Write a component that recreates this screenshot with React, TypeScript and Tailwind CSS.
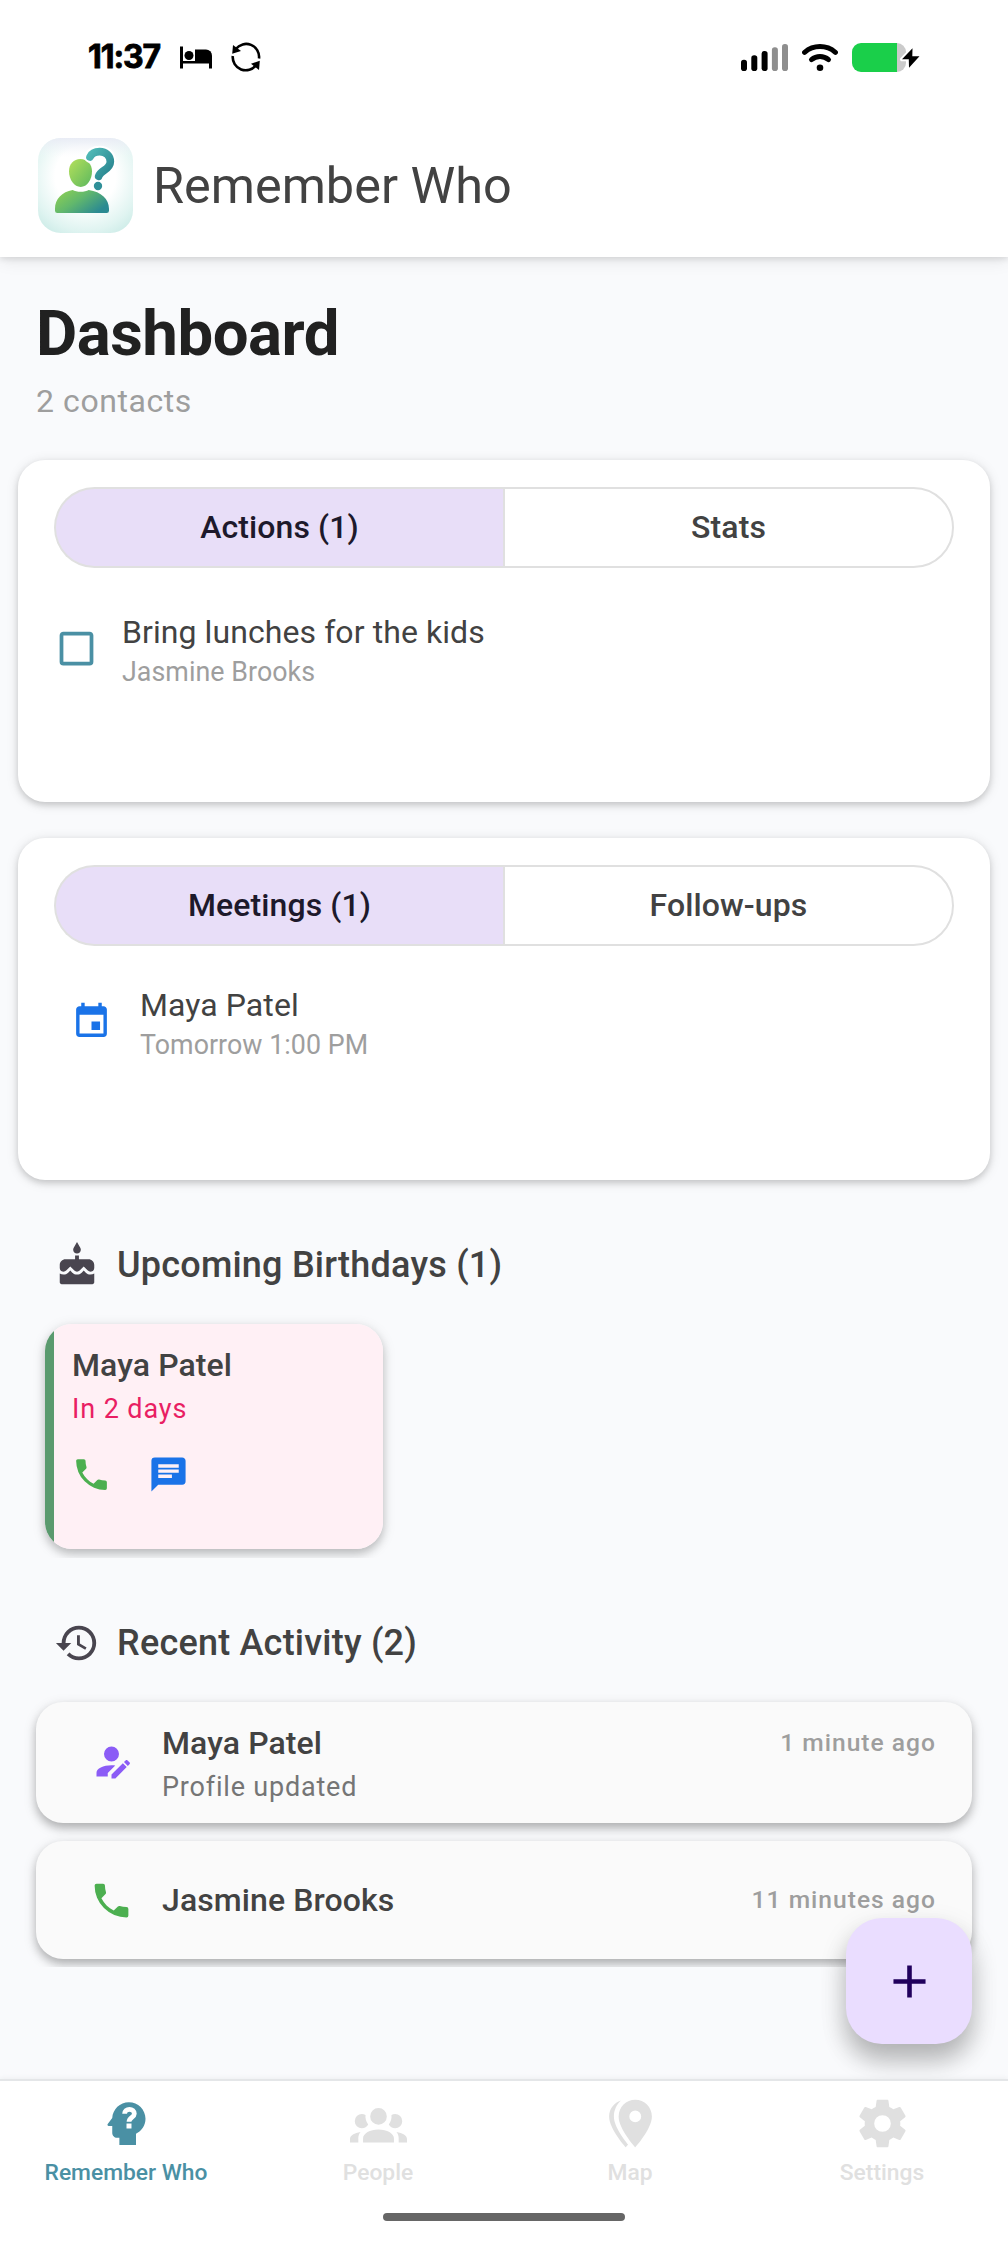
import type { ReactNode } from 'react'

// 24x24 icon paths
const icons = {
  checkbox: 'M19,3H5C3.89,3 3,3.89 3,5V19A2,2 0 0,0 5,21H19A2,2 0 0,0 21,19V5C21,3.89 20.1,3 19,3M19,5V19H5V5H19Z',
  calendar: 'M19,19H5V8H19M16,1V3H8V1H6V3H5C3.89,3 3,3.89 3,5V19A2,2 0 0,0 5,21H19A2,2 0 0,0 21,19V5C21,3.89 20.1,3 19,3H18V1M17,12H12V17H17V12Z',
  cake: 'M12 6C13.11 6 14 5.1 14 4C14 3.62 13.9 3.27 13.71 2.97L12 0L10.29 2.97C10.1 3.27 10 3.62 10 4C10 5.1 10.9 6 12 6M16.6 16L15.53 14.92L14.45 16C13.15 17.29 10.87 17.3 9.56 16L8.49 14.92L7.4 16C6.75 16.64 5.88 17 4.96 17C4.23 17 3.56 16.77 3 16.39V21C3 21.55 3.45 22 4 22H20C20.55 22 21 21.55 21 21V16.39C20.44 16.77 19.77 17 19.04 17C18.12 17 17.25 16.64 16.6 16M18 9H13V7H11V9H6C4.34 9 3 10.34 3 12V13.54C3 14.62 3.88 15.5 4.96 15.5C5.5 15.5 6 15.3 6.34 14.93L8.5 12.8L10.61 14.93C11.35 15.67 12.64 15.67 13.38 14.93L15.5 12.8L17.65 14.93C18 15.3 18.5 15.5 19.03 15.5C20.11 15.5 21 14.62 21 13.54V12C21 10.34 19.66 9 18 9Z',
  history: 'M13.5,8H12V13L16.28,15.54L17,14.33L13.5,12.25V8M13,3A9,9 0 0,0 4,12H1L4.96,16.03L9,12H6A7,7 0 0,1 13,5A7,7 0 0,1 20,12A7,7 0 0,1 13,19C11.07,19 9.32,18.21 8.06,16.94L6.64,18.36C8.27,20 10.5,21 13,21A9,9 0 0,0 22,12A9,9 0 0,0 13,3',
  phone: 'M6.62,10.79C8.06,13.62 10.38,15.94 13.21,17.38L15.41,15.18C15.69,14.9 16.08,14.82 16.43,14.93C17.55,15.3 18.75,15.5 20,15.5A1,1 0 0,1 21,16.5V20A1,1 0 0,1 20,21A17,17 0 0,1 3,4A1,1 0 0,1 4,3H7.5A1,1 0 0,1 8.5,4C8.5,5.25 8.7,6.45 9.07,7.57C9.18,7.92 9.1,8.31 8.82,8.59L6.62,10.79Z',
  message: 'M20,2H4A2,2 0 0,0 2,4V22L6,18H20A2,2 0 0,0 22,16V4C22,2.89 21.1,2 20,2M6,9H18V11H6M14,14H6V12H14M18,8H6V6H18',
  accountEdit: 'M21.7,13.35L20.7,14.35L18.65,12.3L19.65,11.3C19.86,11.09 20.21,11.09 20.42,11.3L21.7,12.58C21.91,12.79 21.91,13.14 21.7,13.35M12,18.94L18.06,12.88L20.11,14.93L14.06,21H12V18.94M12,14C7.58,14 4,15.79 4,18V20H10V18.11L14,14.11C13.34,14.03 12.67,14 12,14M12,4A4,4 0 0,0 8,8A4,4 0 0,0 12,12A4,4 0 0,0 16,8A4,4 0 0,0 12,4Z',
  plus: 'M19,13H13V19H11V13H5V11H11V5H13V11H19V13Z',
  group: 'M12,5.5A3.5,3.5 0 0,1 15.5,9A3.5,3.5 0 0,1 12,12.5A3.5,3.5 0 0,1 8.5,9A3.5,3.5 0 0,1 12,5.5M5,8C5.56,8 6.08,8.15 6.53,8.42C6.38,9.85 6.8,11.27 7.66,12.38C7.16,13.34 6.16,14 5,14A3,3 0 0,1 2,11A3,3 0 0,1 5,8M19,8A3,3 0 0,1 22,11A3,3 0 0,1 19,14C17.84,14 16.84,13.34 16.34,12.38C17.2,11.27 17.62,9.85 17.47,8.42C17.92,8.15 18.44,8 19,8M5.5,18.25C5.5,16.18 8.41,14.5 12,14.5C15.59,14.5 18.5,16.18 18.5,18.25V20H5.5V18.25M0,20V18.5C0,17.11 1.89,15.94 4.45,15.6C3.86,16.28 3.5,17.22 3.5,18.25V20H0M24,20H20.5V18.25C20.5,17.22 20.14,16.28 19.55,15.6C22.11,15.94 24,17.11 24,18.5V20Z',
  markers: 'M14,11.5A2.5,2.5 0 0,0 16.5,9A2.5,2.5 0 0,0 14,6.5A2.5,2.5 0 0,0 11.5,9A2.5,2.5 0 0,0 14,11.5M14,2C17.86,2 21,5.13 21,9C21,14.25 14,22 14,22C14,22 7,14.25 7,9A7,7 0 0,1 14,2M5,9C5,13.5 10.08,19.66 11,20.81L10,22C10,22 3,14.25 3,9C3,5.83 5.11,3.15 8,2.29C6.16,3.94 5,6.33 5,9Z',
  cog: 'M12,15.5A3.5,3.5 0 0,1 8.5,12A3.5,3.5 0 0,1 12,8.5A3.5,3.5 0 0,1 15.5,12A3.5,3.5 0 0,1 12,15.5M19.43,12.97C19.47,12.65 19.5,12.33 19.5,12C19.5,11.67 19.47,11.34 19.43,11L21.54,9.37C21.73,9.22 21.78,8.95 21.66,8.73L19.66,5.27C19.54,5.05 19.27,4.96 19.05,5.05L16.56,6.05C16.04,5.66 15.5,5.32 14.87,5.07L14.5,2.42C14.46,2.18 14.25,2 14,2H10C9.75,2 9.54,2.18 9.5,2.42L9.13,5.07C8.5,5.32 7.96,5.66 7.44,6.05L4.95,5.05C4.73,4.96 4.46,5.05 4.34,5.27L2.34,8.73C2.21,8.95 2.27,9.22 2.46,9.37L4.57,11C4.53,11.34 4.5,11.67 4.5,12C4.5,12.33 4.53,12.65 4.57,12.97L2.46,14.63C2.27,14.78 2.21,15.05 2.34,15.27L4.34,18.73C4.46,18.95 4.73,19.03 4.95,18.95L7.44,17.94C7.96,18.34 8.5,18.68 9.13,18.93L9.5,21.58C9.54,21.82 9.75,22 10,22H14C14.25,22 14.46,21.82 14.5,21.58L14.87,18.93C15.5,18.67 16.04,18.34 16.56,17.94L19.05,18.95C19.27,19.03 19.54,18.95 19.66,18.73L21.66,15.27C21.78,15.05 21.73,14.78 21.54,14.63L19.43,12.97Z',
}

function Icon({ name, className }: { name: keyof typeof icons; className: string }) {
  return (
    <svg viewBox="0 0 24 24" fill="currentColor" className={`shrink-0 ${className}`}>
      <path d={icons[name]} />
    </svg>
  )
}

function HeadQuestion({ className }: { className: string }) {
  return (
    <svg viewBox="0 0 24 24" fill="currentColor" className={className}>
      <path d="M13 3C9.23 3 6.19 5.95 6 9.66L4.08 12.19C3.84 12.5 4.08 13 4.5 13H6V16C6 17.11 6.89 18 8 18H9V21H16V16.31C18.37 15.19 20 12.8 20 10C20 6.14 16.88 3 13 3Z" />
      <path d="M11.2 7.9C11.2 6.8 12.1 6 13.25 6S15.3 6.8 15.3 7.9C15.3 9.4 13.05 9.5 13.05 11.3" fill="none" stroke="#fff" strokeWidth="2" />
      <path d="M12 12h2.1v2.1H12z" fill="#fff" />
    </svg>
  )
}

function AppLogo() {
  return (
    <svg viewBox="0 0 285 285" className="size-[95px] shrink-0">
      <defs>
        <radialGradient id="logoBg" cx="0.5" cy="0.4" r="0.8">
          <stop offset="0.4" stopColor="#fff" />
          <stop offset="0.72" stopColor="#e0f4f1" />
          <stop offset="1" stopColor="#bfe6e1" />
        </radialGradient>
        <linearGradient id="logoTop" x1="0" y1="0" x2="0" y2="1">
          <stop offset="0" stopColor="#e9ecf5" />
          <stop offset="0.2" stopColor="#f3f6fa" stopOpacity="0" />
        </linearGradient>
        <linearGradient id="logoHead" x1="0" y1="0" x2="1" y2="1">
          <stop offset="0" stopColor="#b5e05a" />
          <stop offset="1" stopColor="#5cb85f" />
        </linearGradient>
        <linearGradient id="logoBody" x1="0" y1="0" x2="1" y2="0.6">
          <stop offset="0" stopColor="#93d350" />
          <stop offset="0.5" stopColor="#62b86c" />
          <stop offset="1" stopColor="#2b8a92" />
        </linearGradient>
        <linearGradient id="logoMark" gradientUnits="userSpaceOnUse" x1="145" y1="40" x2="220" y2="100">
          <stop offset="0" stopColor="#52bdb9" />
          <stop offset="1" stopColor="#2a8791" />
        </linearGradient>
      </defs>
      <rect width="285" height="285" rx="68" fill="url(#logoBg)" />
      <rect width="285" height="285" rx="68" fill="url(#logoTop)" />
      <path d="M127 63C147 63 162 78 162 100C162 126 147 147 128 147S93 126 93 100C93 78 107 63 127 63Z" fill="url(#logoHead)" />
      <path d="M104 156C115 163 141 163 152 156C190 161 213 184 213 212V218Q213 225 206 225H58Q51 225 51 218V212C51 184 72 161 104 156Z" fill="url(#logoBody)" />
      <path d="M156 56C161 45 171 41 185 41C204 41 217 54 217 71C217 95 187 96 182 115" fill="none" stroke="#fff" strokeWidth="36" strokeLinecap="round" />
      <path d="M156 57C161 46 171 41 185 41C204 41 217 54 217 71C217 95 187 96 182 115" fill="none" stroke="url(#logoMark)" strokeWidth="23" strokeLinecap="round" />
      <circle cx="180" cy="144" r="12.5" fill="#2f8f98" />
    </svg>
  )
}

function StatusBar() {
  return (
    <div className="flex h-[114px] items-center justify-between bg-white px-[88px]">
      <div className="flex items-center">
        <span className="w-[92px] font-[Inter] text-[32px] leading-none font-bold tracking-[-1.1px] text-black [-webkit-text-stroke:0.8px_#000]">11:37</span>
        <svg viewBox="0 0 32 23" className="h-[23px] w-[32px]">
          <path d="M0 .5h3V15H32v7.5H29V17.5H3v5H0z" />
          <circle cx="9" cy="9.5" r="4.5" />
          <path d="M15 3.5h11a6 6 0 0 1 6 6V15H15z" />
        </svg>
        <svg viewBox="0 0 30 30" className="ml-[19px] h-[30px] w-[30px]" fill="none" stroke="#000" strokeWidth="2.6">
          <path d="M4.8 7A13 13 0 0 1 28 16.5" />
          <path d="M1.8 14A13 13 0 0 0 25.2 23" />
          <path d="M2 3l-.8 8.8 8.8-2.8z" fill="#000" stroke="none" />
          <path d="M28 28l.8-9.3-8.8 3z" fill="#000" stroke="none" />
        </svg>
      </div>
      <div className="flex items-center">
        <svg viewBox="0 0 47 27" className="h-[27px] w-[47px]">
          <rect x="0" y="15.7" width="6" height="11.3" rx="2.8" />
          <rect x="10.3" y="11.3" width="6" height="15.7" rx="2.8" />
          <rect x="20.6" y="7" width="6" height="20" rx="2.8" />
          <rect x="30.9" y="3.3" width="6" height="23.7" rx="2.8" fill="#8e8e8e" />
          <rect x="41" y="0" width="6" height="27" rx="2.8" fill="#8e8e8e" />
        </svg>
        <svg viewBox="0 0 36 27" className="ml-[14px] h-[27px] w-[36px]" fill="none" stroke="#000" strokeWidth="5" strokeLinecap="round">
          <path d="M2.6 8.3C11.5 .7 24.5 .7 33.4 8.3" />
          <path d="M9.5 15.7C14.4 11.5 21.6 11.5 26.5 15.7" />
          <circle cx="18" cy="23.7" r="3.3" fill="#000" stroke="none" />
        </svg>
        <svg viewBox="0 0 68 29" className="ml-[14px] h-[29px] w-[68px]">
          <path d="M45 0a9 9 0 0 1 9 9v11a9 9 0 0 1-9 9z" fill="#cbcbcb" />
          <path d="M9 0H45V29H9a9 9 0 0 1-9-9V9a9 9 0 0 1 9-9z" fill="#1acf4a" />
          <path d="M60.5 5.3L50 16.3h6.8L57 24.7 67.5 13.3H60.3z" stroke="#fff" strokeWidth="4" strokeLinejoin="round" paintOrder="stroke" />
        </svg>
      </div>
    </div>
  )
}

function SegmentedTabs({ active, other }: { active: string; other: string }) {
  return (
    <div className="flex h-[81px] text-[32px] font-medium tracking-[0.1px]">
      <button className="flex flex-1 items-center justify-center rounded-l-full border-2 border-r-0 border-[#e0e0e0] bg-[#e8def8] pb-[2px] text-[#1d192b]">
        {active}
      </button>
      <button className="flex flex-1 items-center justify-center rounded-r-full border-2 border-[#e0e0e0] pb-[2px] text-[#424242]">
        {other}
      </button>
    </div>
  )
}

function DashCard({ children }: { children: ReactNode }) {
  return (
    <section className="mx-[18px] h-[342px] rounded-[27px] bg-white px-9 pt-[27px] shadow-[0_3px_6px_rgba(0,0,0,0.15),0_2px_13px_rgba(0,0,0,0.11)]">
      {children}
    </section>
  )
}

function TwoLines({ title, sub }: { title: string; sub: string }) {
  return (
    <div>
      <p className="text-[32px] leading-[44px] tracking-[0.08px] text-[#424242]">{title}</p>
      <p className="text-[26.8px] leading-9 tracking-[0.05px] text-[#9e9e9e]">{sub}</p>
    </div>
  )
}

function SectionTitle({ icon, label }: { icon: keyof typeof icons; label: string }) {
  return (
    <div className="flex h-[46px] items-center gap-[17px] pl-[54px]">
      <Icon name={icon} className="size-[46px] text-[#49454f]" />
      <h2 className="text-[36px] leading-[46px] font-medium tracking-[0.22px] text-[#424242]">{label}</h2>
    </div>
  )
}

function ActivityCard({ icon, name, sub, time }: { icon: ReactNode; name: string; sub?: string; time: string }) {
  return (
    <div className="flex items-center rounded-[27px] bg-[#fafafa] pr-[36px] pl-[53px] shadow-[0_5px_8px_rgba(0,0,0,0.2),0_4px_14px_rgba(0,0,0,0.14)]">
      {icon}
      <div className={sub ? 'ml-7 flex-1 pt-[19px] pb-[14px]' : 'ml-7 flex-1 pt-[37px] pb-9'}>
        <div className="flex items-center justify-between">
          <p className="text-[32px] leading-[45px] font-medium tracking-[0.1px] text-[#424242]">{name}</p>
          <p className="text-[24.6px] font-medium tracking-[1px] text-[#9e9e9e]">{time}</p>
        </div>
        {sub && <p className="text-[27px] leading-[43px] tracking-[0.8px] text-[#757575]">{sub}</p>}
      </div>
    </div>
  )
}

function NavItem({ icon, label, active }: { icon: ReactNode; label: string; active?: boolean }) {
  return (
    <div className={`flex flex-1 flex-col items-center ${active ? 'text-[#4a90a4]' : 'text-[#e0e0e0]'}`}>
      {icon}
      <span className="mt-[6px] text-[22.8px] leading-[29px] font-medium">{label}</span>
    </div>
  )
}

export default function App() {
  return (
    <div className="flex h-[2244px] w-[1008px] flex-col overflow-hidden bg-[#f9fafc] font-[Roboto,sans-serif]">
      <StatusBar />

      {/* App header */}
      <header className="z-10 flex h-[143px] shrink-0 items-center gap-5 bg-white pl-[38px] shadow-[0_2px_6px_rgba(0,0,0,0.11),0_4px_16px_rgba(0,0,0,0.08)] [clip-path:inset(0_0_-30px_0)]">
        <AppLogo />
        <span className="text-[50.4px] text-[#424242]">Remember Who</span>
      </header>

      <main className="relative h-[1822px] shrink-0 overflow-hidden">
        <div className="px-9 pt-[35px]">
          <h1 className="text-[63.5px] leading-[83px] font-bold tracking-[-0.5px] text-[#212121]">Dashboard</h1>
          <p className="mt-1 text-[32px] leading-[45px] tracking-[0.57px] text-[#9e9e9e]">2 contacts</p>
        </div>

        <div className="mt-9 space-y-9">
          <DashCard>
            <SegmentedTabs active="Actions (1)" other="Stats" />
            <div className="mt-[42px] flex items-center gap-[23px]">
              <Icon name="checkbox" className="mb-1 size-[45px] text-[#4a90a4]" />
              <TwoLines title="Bring lunches for the kids" sub="Jasmine Brooks" />
            </div>
          </DashCard>
          <DashCard>
            <SegmentedTabs active="Meetings (1)" other="Follow-ups" />
            <div className="mt-[37px] flex items-center gap-[28px] pl-[17px]">
              <Icon name="calendar" className="mb-[3px] size-[41px] text-[#1a73e8]" />
              <TwoLines title="Maya Patel" sub="Tomorrow 1:00 PM" />
            </div>
          </DashCard>
        </div>

        {/* Birthdays */}
        <section className="mt-[62px]">
          <SectionTitle icon="cake" label="Upcoming Birthdays (1)" />
          <div className="overflow-hidden pt-9 pb-[9px] pl-[45px]">
            <div className="h-[225px] w-[338px] rounded-[27px] shadow-[0_5px_8px_rgba(0,0,0,0.17),0_3px_14px_rgba(0,0,0,0.13)]">
              <div className="flex h-full overflow-hidden rounded-[27px] bg-[#fff0f5]">
                <div className="w-[9px] bg-[#5a9a6e]" />
                <div className="pt-[19px] pl-[18px]">
                  <p className="text-[32px] leading-[45px] font-medium tracking-[0.1px] text-[#424242]">Maya Patel</p>
                  <p className="text-[27px] leading-[42px] tracking-[0.9px] text-[#e91e63]">In 2 days</p>
                  <div className="-ml-px mt-6 flex gap-9">
                    <Icon name="phone" className="size-[41px] text-[#4caf50]" />
                    <Icon name="message" className="size-[41px] text-[#1a73e8]" />
                  </div>
                </div>
              </div>
            </div>
          </div>
        </section>

        {/* Recent activity */}
        <section className="mt-[62px]">
          <SectionTitle icon="history" label="Recent Activity (2)" />
          <div className="space-y-[18px] overflow-hidden px-9 pt-9 pb-2">
            <ActivityCard
              icon={<Icon name="accountEdit" className="mb-[2px] size-[45px] text-[#8b5cf6]" />}
              name="Maya Patel"
              sub="Profile updated"
              time="1 minute ago"
            />
            <ActivityCard
              icon={<Icon name="phone" className="size-[45px] text-[#4caf50]" />}
              name="Jasmine Brooks"
              time="11 minutes ago"
            />
          </div>
        </section>

        <button className="absolute right-9 bottom-[35px] flex size-[126px] items-center justify-center rounded-[36px] bg-[#eaddff] text-[#21005d] shadow-[0_18px_24px_rgba(0,0,0,0.2),0_10px_28px_rgba(0,0,0,0.13)]">
          <Icon name="plus" className="size-[55px]" />
        </button>
      </main>

      {/* Bottom tabs */}
      <nav className="z-10 flex flex-1 flex-col border-t-2 border-[#e4e6e8] bg-white shadow-[0_-1px_5px_rgba(0,0,0,0.05)]">
        <div className="flex pt-[14px]">
          <NavItem active icon={<HeadQuestion className="size-[57px]" />} label="Remember Who" />
          <NavItem icon={<Icon name="group" className="size-[57px]" />} label="People" />
          <NavItem icon={<Icon name="markers" className="size-[57px]" />} label="Map" />
          <NavItem icon={<Icon name="cog" className="size-[57px]" />} label="Settings" />
        </div>
        <div className="mx-auto mt-[26px] h-2 w-[242px] rounded-full bg-[#666]" />
      </nav>
    </div>
  )
}
